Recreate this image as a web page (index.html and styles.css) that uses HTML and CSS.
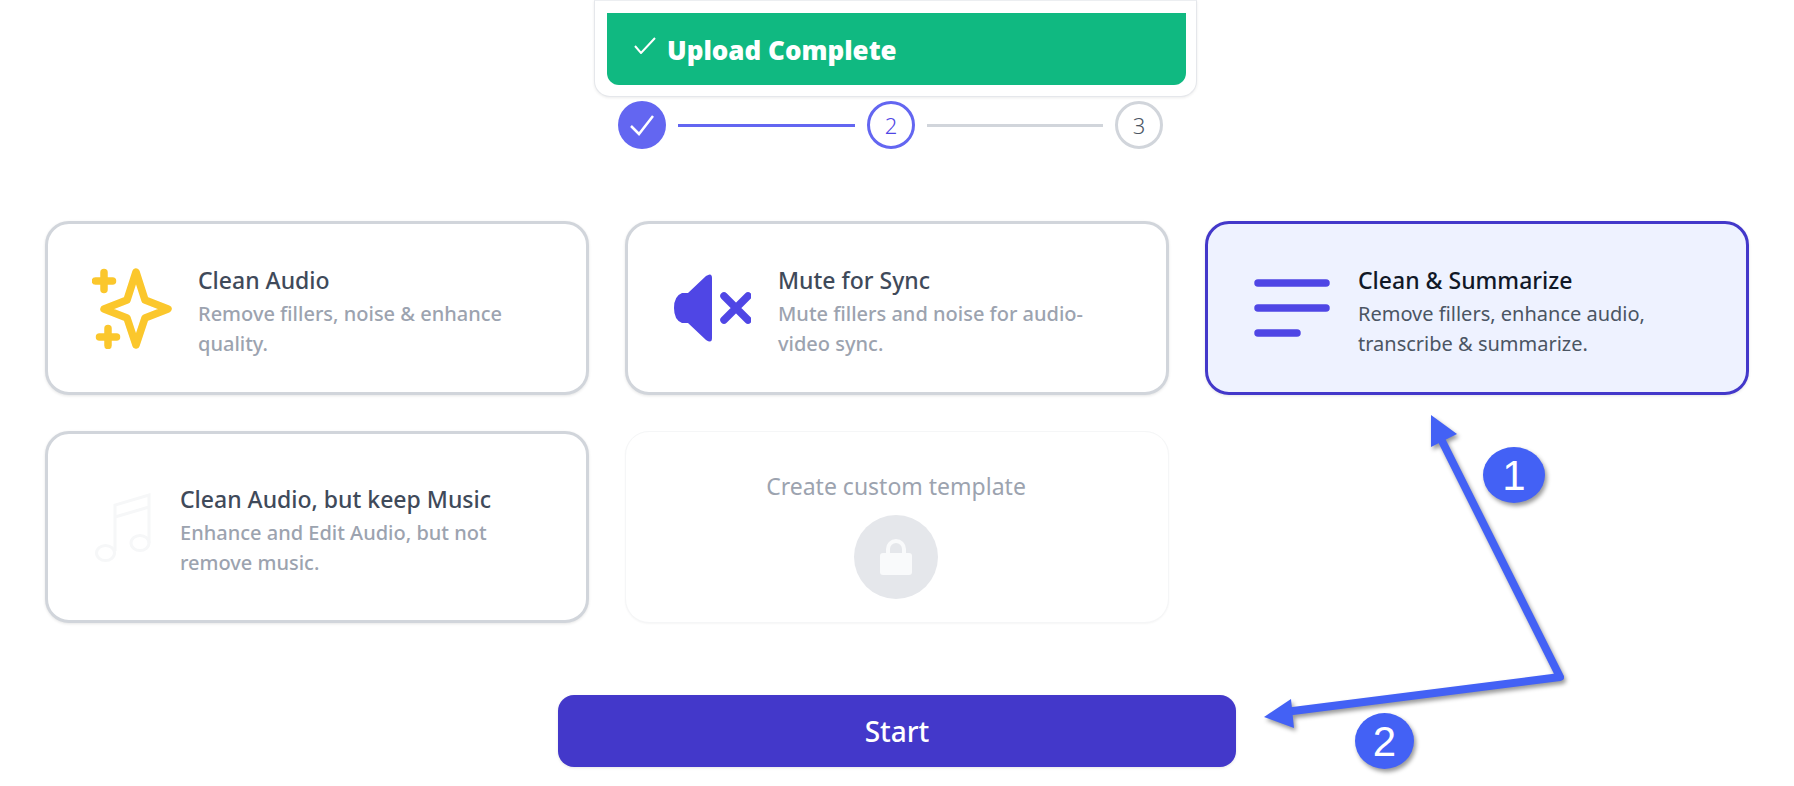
FILE: index.html
```html
<!DOCTYPE html>
<html lang="en">
<head>
<meta charset="utf-8">
<title>Choose a template</title>
<link rel="stylesheet" href="styles.css">
</head>
<body>
<div class="page">
  <header class="progress">
    <div class="upload-card">
      <div class="upload-banner">
        <svg class="banner-check" viewBox="0 0 22 17"><path d="M1 9l6 7L21 1"/></svg>
        <span class="banner-text">Upload Complete</span>
      </div>
    </div>
    <ol class="stepper">
      <li class="step step-done"><svg viewBox="0 0 48 48"><path d="M13 25l8 8 14-18"/></svg></li>
      <li class="step-line step-line-on"></li>
      <li class="step step-active">2</li>
      <li class="step-line step-line-off"></li>
      <li class="step step-todo">3</li>
    </ol>
  </header>

  <section class="grid">
    <article class="card">
      <div class="card-icon">
        <svg class="ic-star" viewBox="0 0 80 81"><path d="M44 4l9 28 23 9-23 9-9 27-9-27-23-9 23-9z"/><path d="M12 4.500v17M3.500 13h17M16 60.500v17M7.500 69h17"/></svg>
      </div>
      <div class="card-text">
        <h3 class="card-title">Clean Audio</h3>
        <p class="card-desc">Remove fillers, noise &amp; enhance quality.</p>
      </div>
    </article>

    <article class="card">
      <div class="card-icon">
        <svg class="ic-mute" viewBox="0 0 77 68"><path class="mute-body" d="M14 19L32 2q6-4 6 2v60q0 6-6 2L14 49H8q-8-3-8-15t8-15z"/><path class="mute-x" d="M50 22l24 24M74 22L50 46"/></svg>
      </div>
      <div class="card-text">
        <h3 class="card-title">Mute for Sync</h3>
        <p class="card-desc">Mute fillers and noise for audio-video sync.</p>
      </div>
    </article>

    <article class="card card-selected">
      <div class="card-icon">
        <svg class="ic-lines" viewBox="0 0 76 58"><path d="M4 4h68M4 29h68M4 54h39"/></svg>
      </div>
      <div class="card-text">
        <h3 class="card-title">Clean &amp; Summarize</h3>
        <p class="card-desc">Remove fillers, enhance audio, transcribe &amp; summarize.</p>
      </div>
    </article>

    <article class="card">
      <div class="card-icon card-icon-narrow">
        <svg class="ic-music" viewBox="0 0 56 69"><path d="M20 58V12L54 2v48M20 24l34-10"/><ellipse cx="10.500" cy="60" rx="9" ry="7.500"/><ellipse cx="45" cy="50" rx="9" ry="7.500"/></svg>
      </div>
      <div class="card-text">
        <h3 class="card-title">Clean Audio, but keep Music</h3>
        <p class="card-desc">Enhance and Edit Audio, but not remove music.</p>
      </div>
    </article>

    <article class="card card-locked">
      <h3 class="locked-title">Create custom template</h3>
      <div class="lock-circle">
        <svg class="ic-lock" viewBox="0 0 32 36"><path class="lock-shackle" d="M8 17V10a8 8 0 0 1 16 0v7"/><rect y="14" width="32" height="22" rx="3"/></svg>
      </div>
    </article>
  </section>

  <div class="actions">
    <button class="start-btn" type="button">Start</button>
  </div>

  <svg class="annotation" viewBox="0 0 1794 786">
    <g class="anno-shapes">
      <path class="anno-shaft" d="M1440 437L1560 677L1285 712"/>
      <path class="anno-head" d="M1431 415L1457 434L1431 447z"/>
      <path class="anno-head" d="M1264 717L1291 699L1294 728z"/>
      <ellipse class="anno-badge" cx="1514" cy="475" rx="31" ry="28"/>
      <ellipse class="anno-badge" cx="1384.500" cy="741" rx="29.500" ry="28"/>
    </g>
    <text class="anno-num" x="1514" y="490">1</text>
    <text class="anno-num" x="1384.500" y="756">2</text>
  </svg>
</div>
</body>
</html>
```

FILE: styles.css
```css
* { box-sizing: border-box; }
html, body { margin: 0; padding: 0; background: #fff; }
body { font-family: "Noto Sans", "Open Sans", "Liberation Sans", sans-serif; }

.page {
  position: relative;
  width: 1794px;
  height: 786px;
  overflow: hidden;
  padding: 0 45px;
}

.progress { width: 603px; margin-left: 549px; }

.upload-card {
  height: 97px;
  padding: 13px 10px 0 12px;
  background: #fff;
  border: 1px solid #e5e7eb;
  border-top: 1px solid #eceef1;
  border-radius: 0 0 16px 16px;
  box-shadow: 0 1px 3px rgba(0, 0, 0, .08);
}

.upload-banner {
  display: flex;
  align-items: center;
  height: 72px;
  margin-top: -1px;
  padding-left: 27px;
  gap: 11px;
  color: #fff;
  background: #10b981;
  border-radius: 0 0 12px 12px;
}
.banner-check { width: 22px; height: 17px; margin-top: -8px; fill: none; stroke: #fff; stroke-width: 2; }
.banner-text { font-size: 26px; font-weight: 900; line-height: 32px; margin-top: 2px; }

.stepper {
  display: flex;
  align-items: center;
  gap: 12px;
  margin: 4px 0 0;
  padding: 0 0 0 24px;
  list-style: none;
}
.step {
  display: flex;
  align-items: center;
  justify-content: center;
  flex: none;
  width: 48px;
  height: 48px;
  border-radius: 50%;
  font-size: 22px;
  font-weight: 300;
}
.step-done { background: #6366f1; }
.step-done svg { width: 48px; height: 48px; fill: none; stroke: #fff; stroke-width: 2.500; }
.step-active { border: 3px solid #6366f1; color: #4f46e5; }
.step-todo { border: 3px solid #d1d5db; color: #4b5563; }
.step-line { flex: none; width: 177px; height: 3px; background: #d1d5db; }
.step-line-on { background: #6366f1; }
.step-line-off { width: 176px; }

.grid {
  display: grid;
  grid-template-columns: repeat(3, 544px);
  grid-template-rows: 174px 192px;
  gap: 36px;
  margin-top: 72px;
}

.card {
  display: flex;
  align-items: center;
  gap: 21px;
  padding-left: 39px;
  background: #fff;
  border: 3px solid #d1d5db;
  border-radius: 24px;
  box-shadow: 0 1px 3px rgba(0, 0, 0, .1);
}
.card-selected { background: #eef2ff; border-color: #4338ca; }

.card-icon { display: flex; justify-content: center; flex: none; width: 90px; }
.card-icon-narrow { width: 72px; }

.card-text { padding-top: 7px; width: 345px; }
.card-title { margin: 0 0 4px; font-size: 23px; font-weight: 500; line-height: 30px; color: #3f4a5a; }
.card-desc { margin: 0; font-size: 20px; font-weight: 500; line-height: 30px; color: #9ca3af; }
.card-selected .card-title { color: #111827; }
.card-selected .card-desc { color: #4b5563; font-weight: 400; }

.ic-star { width: 80px; height: 81px; fill: none; stroke: #fbc72c; stroke-width: 7.500; stroke-linecap: round; stroke-linejoin: round; }
.ic-mute { width: 77px; height: 68px; }
.mute-body { fill: #4f46e5; }
.mute-x { fill: none; stroke: #4f46e5; stroke-width: 7.500; stroke-linecap: round; }
.ic-lines { width: 76px; height: 58px; fill: none; stroke: #4f46e5; stroke-width: 7.500; stroke-linecap: round; }
.ic-music { width: 56px; height: 69px; fill: none; stroke: #f6f7f8; stroke-width: 3; }

.card-locked {
  flex-direction: column;
  gap: 14px;
  padding: 39px 2px 0 0;
  border: 1px solid #f5f6f7;
  box-shadow: 0 1px 2px rgba(0, 0, 0, .04);
}
.locked-title { margin: 0; font-size: 23px; font-weight: 400; line-height: 30px; color: #9ca3af; }
.lock-circle {
  display: flex;
  align-items: center;
  justify-content: center;
  width: 84px;
  height: 84px;
  border-radius: 50%;
  background: #e5e7eb;
}
.ic-lock { width: 32px; height: 36px; fill: #f9fafb; }
.lock-shackle { fill: none; stroke: #f9fafb; stroke-width: 4; }

.actions { display: flex; justify-content: center; margin-top: 72px; }
.start-btn {
  width: 678px;
  height: 72px;
  border: 0;
  border-radius: 16px;
  background: #4338ca;
  color: #fff;
  font: 500 28px/32px "Noto Sans", "Open Sans", sans-serif;
  box-shadow: 0 1px 3px rgba(0, 0, 0, .1);
}

.annotation { position: absolute; left: 0; top: 0; width: 1794px; height: 786px; pointer-events: none; }
.anno-shapes { filter: drop-shadow(2px 3px 2px rgba(0, 0, 0, .4)); }
.anno-shaft { fill: none; stroke: #4361f5; stroke-width: 8; stroke-linejoin: round; stroke-linecap: round; }
.anno-head { fill: #4361f5; }
.anno-badge { fill: #4361f5; }
.anno-num { font-family: "Liberation Sans", Arial, sans-serif; font-size: 42px; fill: #fff; text-anchor: middle; }
```
